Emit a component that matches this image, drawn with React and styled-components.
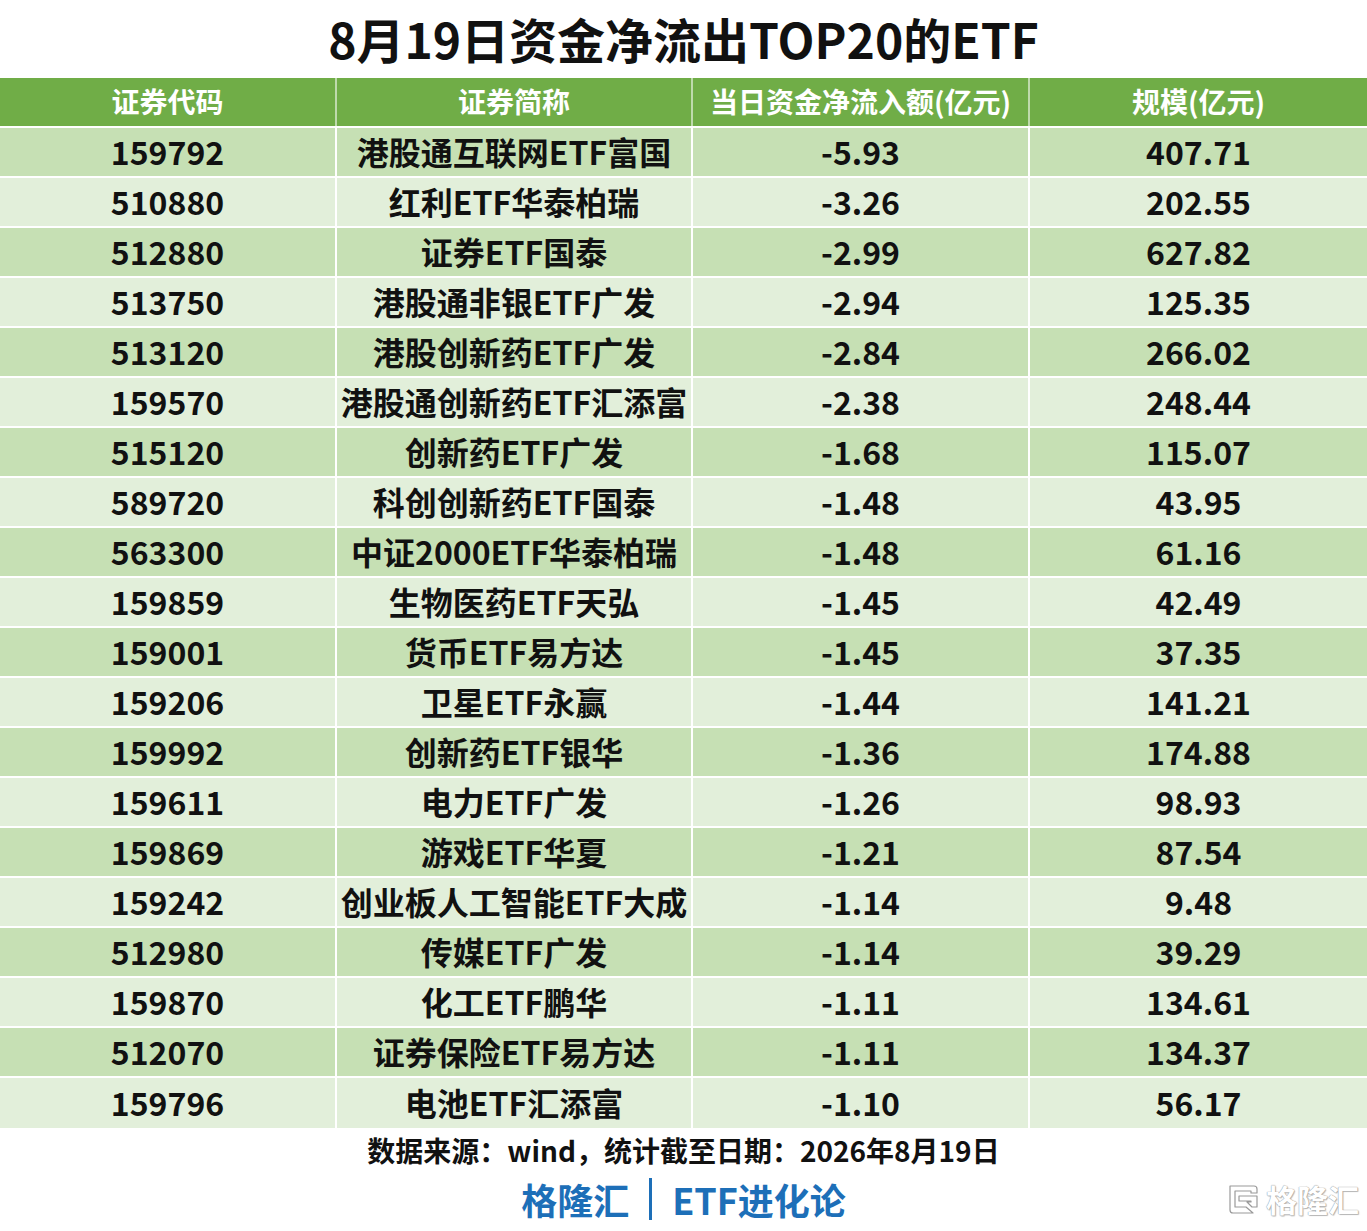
import React from "react";
import styled, { createGlobalStyle } from "styled-components";

const GlobalStyle = createGlobalStyle`
  html, body {
    margin: 0;
    padding: 0;
    background: #ffffff;
  }
  body {
    font-family: "Noto Sans CJK SC", "Noto Sans", sans-serif;
  }
`;

const rows = [
  ["159792", "港股通互联网ETF富国", "-5.93", "407.71"],
  ["510880", "红利ETF华泰柏瑞", "-3.26", "202.55"],
  ["512880", "证券ETF国泰", "-2.99", "627.82"],
  ["513750", "港股通非银ETF广发", "-2.94", "125.35"],
  ["513120", "港股创新药ETF广发", "-2.84", "266.02"],
  ["159570", "港股通创新药ETF汇添富", "-2.38", "248.44"],
  ["515120", "创新药ETF广发", "-1.68", "115.07"],
  ["589720", "科创创新药ETF国泰", "-1.48", "43.95"],
  ["563300", "中证2000ETF华泰柏瑞", "-1.48", "61.16"],
  ["159859", "生物医药ETF天弘", "-1.45", "42.49"],
  ["159001", "货币ETF易方达", "-1.45", "37.35"],
  ["159206", "卫星ETF永赢", "-1.44", "141.21"],
  ["159992", "创新药ETF银华", "-1.36", "174.88"],
  ["159611", "电力ETF广发", "-1.26", "98.93"],
  ["159869", "游戏ETF华夏", "-1.21", "87.54"],
  ["159242", "创业板人工智能ETF大成", "-1.14", "9.48"],
  ["512980", "传媒ETF广发", "-1.14", "39.29"],
  ["159870", "化工ETF鹏华", "-1.11", "134.61"],
  ["512070", "证券保险ETF易方达", "-1.11", "134.37"],
  ["159796", "电池ETF汇添富", "-1.10", "56.17"]
];

const headers = ["证券代码", "证券简称", "当日资金净流入额(亿元)", "规模(亿元)"];

const Page = styled.div`
  position: relative;
  width: 1367px;
  height: 1231px;
  display: flex;
  flex-direction: column;
  background: #ffffff;
  overflow: hidden;
`;

const Title = styled.h1`
  margin: 0;
  height: 78px;
  display: flex;
  align-items: center;
  justify-content: center;
  font-size: 48px;
  font-weight: 700;
  color: #111111;
  padding-bottom: 2px;
  box-sizing: border-box;
`;

const Table = styled.div`
  display: flex;
  flex-direction: column;
`;

const Row = styled.div`
  display: grid;
  grid-template-columns: 337px 356px 337px 337px;
  height: 50px;
  box-sizing: border-box;
  border-bottom: 2px solid #ffffff;
  background: ${(p) => (p.$head ? "#70ad47" : p.$odd ? "#c6e0b4" : "#e2efda")};
  &:last-child {
    border-bottom: none;
  }
`;

const Cell = styled.div`
  display: flex;
  align-items: center;
  justify-content: center;
  box-sizing: border-box;
  border-right: 2px solid ${(p) => (p.$head ? "rgba(255,255,255,0.55)" : "#ffffff")};
  font-weight: 700;
  font-size: ${(p) => (p.$head ? "28px" : "32px")};
  color: ${(p) => (p.$head ? "#ffffff" : "#111111")};
  white-space: nowrap;
  padding-bottom: 2px;
  &:last-child {
    border-right: none;
  }
`;

const Source = styled.div`
  height: 44px;
  display: flex;
  align-items: center;
  justify-content: center;
  font-size: 28px;
  font-weight: 700;
  color: #111111;
`;

const Brand = styled.div`
  flex: 1;
  display: flex;
  align-items: center;
  justify-content: center;
  gap: 20px;
  padding-bottom: 6px;
  font-size: 36px;
  font-weight: 700;
  color: #1d6fb8;
`;

const Divider = styled.span`
  display: inline-block;
  width: 3px;
  height: 42px;
  background: #1d6fb8;
`;

const Watermark = styled.div`
  position: absolute;
  right: 8px;
  bottom: 10px;
  display: flex;
  align-items: center;
  gap: 6px;
  font-size: 31px;
  font-weight: 700;
  color: #ffffff;
  text-shadow: 0 0 1px #9a9a9a, 0 0 1px #9a9a9a, 1px 1px 1px #bdbdbd;
`;

function LogoMark() {
  return (
    <svg width="34" height="32" viewBox="0 0 34 32">
      <path
        d="M4 3 H28 Q31 3 31 6 V10 H25 V8 H9 V24 H20 L27 30 H7 Q4 30 4 27 Z M13 13 H31 V24 L26 24 L21 19 H25 V18 H13 Z"
        fill="#ffffff"
        stroke="#9a9a9a"
        strokeWidth="1.2"
        strokeLinejoin="round"
      />
    </svg>
  );
}

export default function App() {
  return (
    <Page>
      <GlobalStyle />
      <Title>8月19日资金净流出TOP20的ETF</Title>
      <Table>
        <Row $head>
          {headers.map((h) => (
            <Cell $head key={h}>
              {h}
            </Cell>
          ))}
        </Row>
        {rows.map((r, i) => (
          <Row key={r[0] + i} $odd={i % 2 === 0}>
            {r.map((c, j) => (
              <Cell key={j}>{c}</Cell>
            ))}
          </Row>
        ))}
      </Table>
      <Source>数据来源：wind，统计截至日期：2026年8月19日</Source>
      <Brand>
        <span>格隆汇</span>
        <Divider />
        <span>ETF进化论</span>
      </Brand>
      <Watermark>
        <LogoMark />
        <span>格隆汇</span>
      </Watermark>
    </Page>
  );
}
